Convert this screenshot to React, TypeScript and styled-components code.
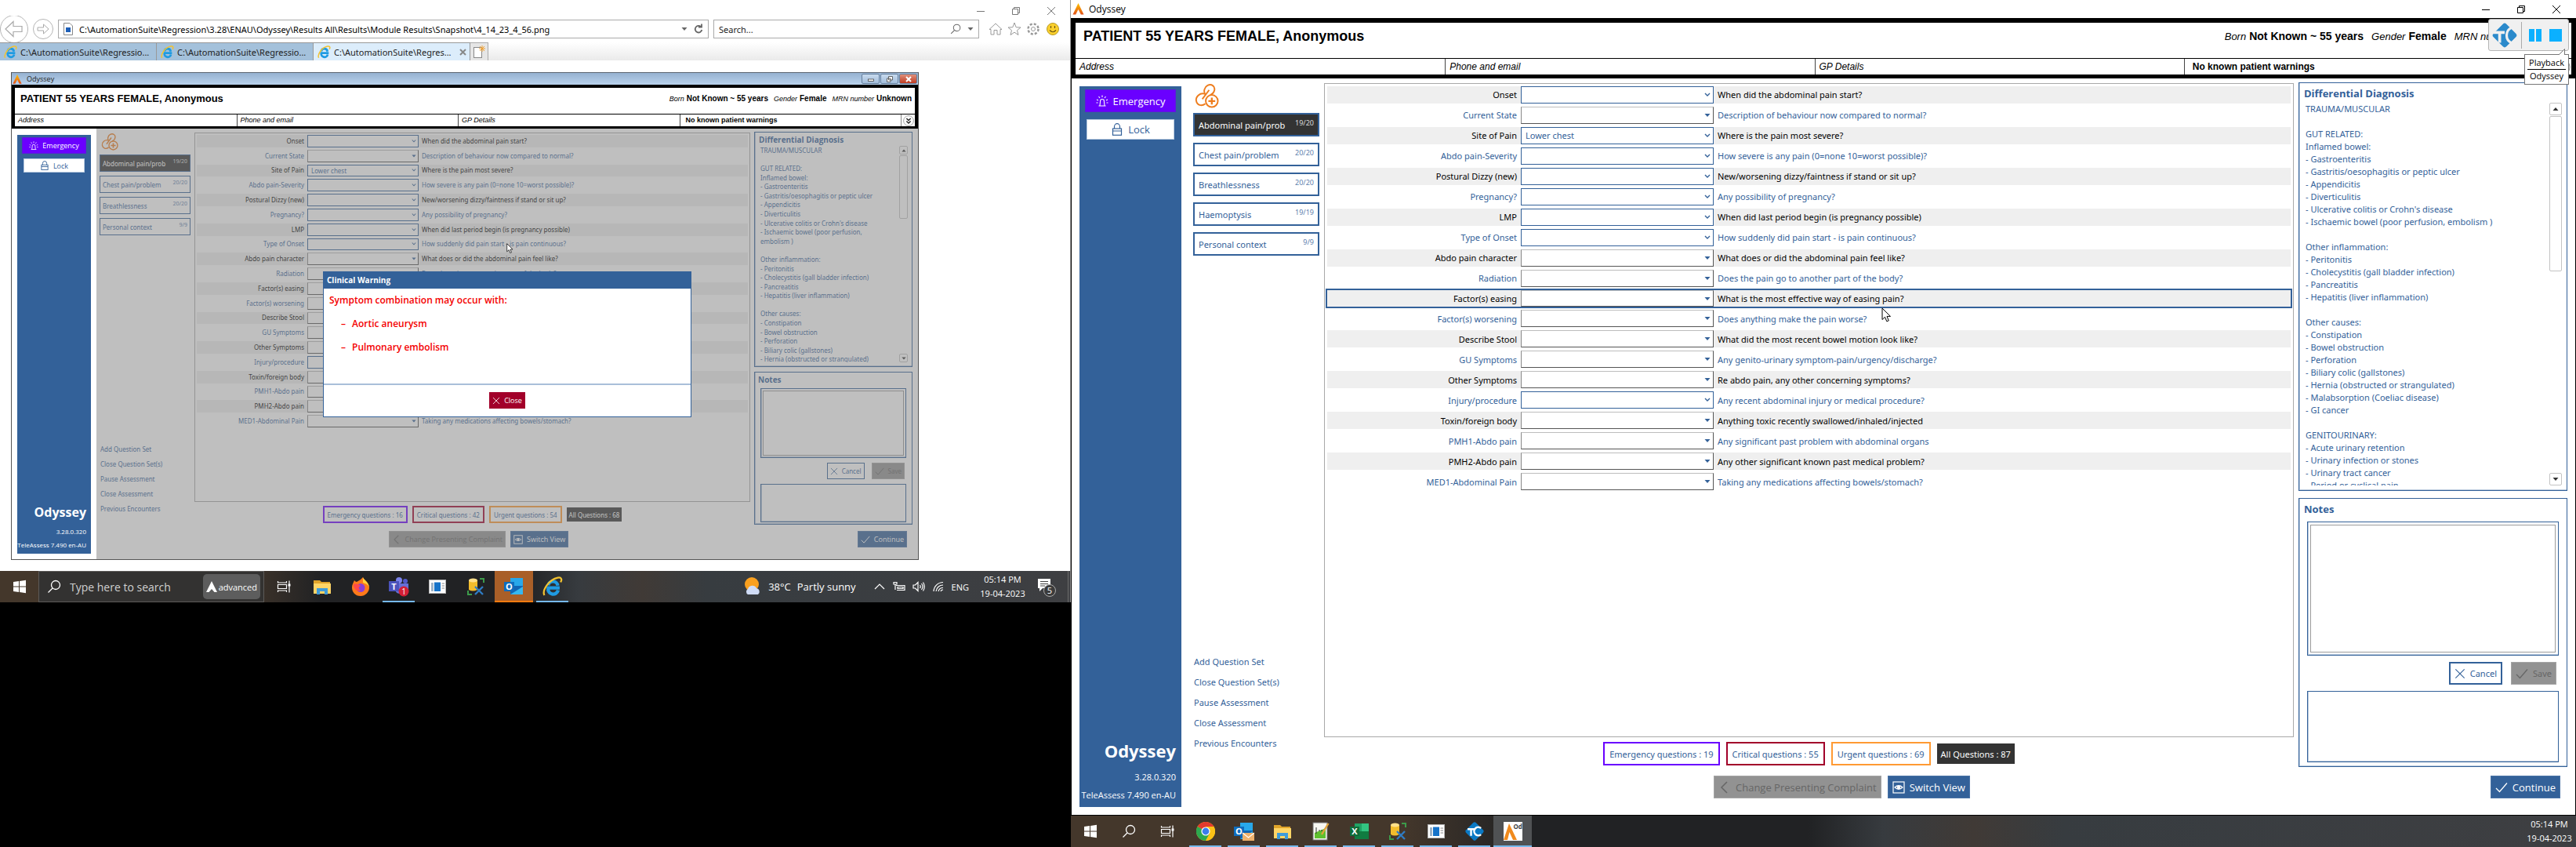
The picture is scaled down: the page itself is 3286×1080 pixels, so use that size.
import React, { useId } from "react";
import styled, { createGlobalStyle, css, ThemeProvider } from "styled-components";

/* ------------------------------------------------------------------ */
/* Sizes: the live window and the reduced snapshot share all the parts */
/* ------------------------------------------------------------------ */

interface Metrics {
  titleH: number;
  headTop: number;
  headSide: number;
  headBottom: number;
  headUpper: number;
  headLine: number;
  headLower: number;
  headPad: number;
  nameSize: number;
  factSize: number;
  factLabel: number;
  cellSize: number;
  cellPad: number;
  text: number;
  tiny: number;
  heading: number;
  button: number;
  brand: number;
  version: number;
  sideTop: number;
  sideBottom: number;
  sidePad: number;
  sideGap: number;
  sideW: number;
  emergencyH: number;
  lockH: number;
  workTop: number;
  workLeft: number;
  workRight: number;
  workBottom: number;
  navW: number;
  gap: number;
  infoW: number;
  linkIcon: number;
  tabH: number;
  tabGap: number;
  tabPad: number;
  navLinkH: number;
  navBottom: number;
  rowsH: number;
  rowGap: number;
  rowPad: number;
  labelW: number;
  comboW: number;
  textPad: number;
  countH: number;
  countPad: number;
  countGap: number;
  countTop: number;
  actionH: number;
  actionTop: number;
  actionPad: number;
  actionGap: number;
  continueGap: number;
  listH: string;
  lineH: string;
  listTop: number;
  scrollW: number;
  thumbH: number;
  notesTitle: number;
  notesH: number;
  notesSide: number;
  notesInset: number;
  notesGap: number;
  commentH: number;
  icon: number;
  border: number;
}

declare module "styled-components" {
  export interface DefaultTheme extends Metrics {}
}

const fullSize: Metrics = {
  titleH: 23, headTop: 6, headSide: 5, headBottom: 5, headUpper: 45, headLine: 35, headLower: 20, headPad: 10,
  nameSize: 18, factSize: 14, factLabel: 13, cellSize: 12, cellPad: 5,
  text: 11, tiny: 9, heading: 13, button: 13, brand: 22, version: 11,
  sideTop: 10, sideBottom: 10, sidePad: 10, sideGap: 7, sideW: 130, emergencyH: 29, lockH: 26,
  workTop: 5, workLeft: 8, workRight: 10, workBottom: 21, navW: 161, gap: 6, infoW: 343,
  linkIcon: 31, tabH: 30, tabGap: 8, tabPad: 5, navLinkH: 26, navBottom: 17,
  rowsH: 515, rowGap: 4, rowPad: 3, labelW: 247, comboW: 246, textPad: 5,
  countH: 30, countPad: 6, countGap: 8, countTop: 6,
  actionH: 29, actionTop: 11, actionPad: 5, actionGap: 8, continueGap: 9,
  listH: "auto", lineH: "16px", listTop: 25, scrollW: 16, thumbH: 198,
  notesTitle: 29, notesH: 171, notesSide: 10, notesInset: 3, notesGap: 8, commentH: 91,
  icon: 16, border: 2,
};

const snapshotSize: Metrics = {
  titleH: 16, headTop: 4, headSide: 4, headBottom: 3, headUpper: 33, headLine: 28, headLower: 15, headPad: 7,
  nameSize: 13, factSize: 10, factLabel: 9, cellSize: 9, cellPad: 4,
  text: 8, tiny: 7, heading: 10, button: 9, brand: 16, version: 8,
  sideTop: 8, sideBottom: 7, sidePad: 7, sideGap: 7, sideW: 94, emergencyH: 21, lockH: 18,
  workTop: 4, workLeft: 4, workRight: 7, workBottom: 15, navW: 116, gap: 5, infoW: 202,
  linkIcon: 22, tabH: 22, tabGap: 5, tabPad: 3, navLinkH: 19, navBottom: 11,
  rowsH: 373, rowGap: 3, rowPad: 2, labelW: 141, comboW: 142, textPad: 4,
  countH: 22, countPad: 4, countGap: 6, countTop: 5,
  actionH: 21, actionTop: 8, actionPad: 3, actionGap: 6, continueGap: 7,
  listH: "278px", lineH: "11px", listTop: 17, scrollW: 11, thumbH: 81,
  notesTitle: 20, notesH: 89, notesSide: 7, notesInset: 2, notesGap: 6, commentH: 49,
  icon: 12, border: 1,
};

const BLUE = "#336199";
const VIOLET = "#6a00ff";
const CRIMSON = "#a2002a";
const AMBER = "#ff9a33";
const UI = `"Open Sans", "Noto Sans", sans-serif`;
const FORM = `"Noto Sans", "Open Sans", sans-serif`;
const ARIAL = `"Liberation Sans", Arial, sans-serif`;

const GlobalStyle = createGlobalStyle`
  *, *::before, *::after { box-sizing: border-box; }
  body { margin: 0; background: #000; font-family: ${UI}; color: #000; }
  button, input, select, textarea { font-family: inherit; margin: 0; border-radius: 0; }
  h1, h2, ul, p, dl, dd { margin: 0; padding: 0; }
  ul { list-style: none; }
  svg { display: block; flex: none; }
  a { text-decoration: none; color: inherit; }
`;

const Screens = styled.main`
  display: grid;
  grid-template-columns: 1366fr 1920fr;
  grid-template-rows: minmax(0, 1fr);
  height: 100vh;
  align-items: start;
`;

/* ------------------------------ icons ------------------------------ */

const LogoA = ({ size }: { size: number }) => (
  <svg width={size} height={size} viewBox="0 0 16 16">
    <defs>
      <linearGradient id="flame" x1="0" y1="0" x2="0" y2="1">
        <stop offset="0" stopColor="#ffc400" />
        <stop offset="1" stopColor="#e2501a" />
      </linearGradient>
    </defs>
    <path d="M8 0 L15.500 15.500 H11.500 L8 8.500 L4.500 15.500 H.5 Z" fill="url(#flame)" />
  </svg>
);

const Siren = ({ size }: { size: number }) => (
  <svg width={size} height={size} viewBox="0 0 16 16" fill="none" stroke="currentColor" strokeWidth="1.1">
    <path d="M5 13.500 L5.800 6.500 Q8 4.500 10.200 6.500 L11 13.500 M3.500 14 H12.500 M8 .5 V3 M3.500 2 L5 4 M12.500 2 L11 4 M1 6 L3 7 M15 6 L13 7 M.5 10 H2.500 M15.500 10 H13.500" />
  </svg>
);

const Padlock = ({ size }: { size: number }) => (
  <svg width={size} height={size} viewBox="0 0 16 16" fill="none" stroke="currentColor" strokeWidth="1.2">
    <rect x="2.500" y="7" width="11" height="8.300" />
    <path d="M4.500 7 V4.500 A3.500 3.800 0 0 1 11.500 4.500 V7 M2.500 10 H13.500" />
  </svg>
);

const ChainPlus = ({ size }: { size: number }) => (
  <svg width={size} height={size} viewBox="0 0 32 32" fill="none" stroke="#ee7d1e" strokeWidth="2">
    <path d="M14 14 C11 10 13 4 17 2 C22 -.5 27 3 26 8 C25.500 11 23 13.500 20.500 14.500" />
    <path d="M19 8 L10 20 M13 13 C7 11 1 17 2 22 C3 28 9 30 14 26" />
    <circle cx="22.500" cy="22.500" r="8" />
    <path d="M22.500 18 V27 M18 22.500 H27" strokeWidth="2.400" />
  </svg>
);

const ChevronDown = ({ size }: { size: number }) => (
  <svg width={size} height={size} viewBox="0 0 8 8" fill="none" stroke={BLUE} strokeWidth="1.400">
    <path d="M1 2 L4 5 L7 2" />
  </svg>
);

const Triangle = ({ size, up, color = BLUE }: { size: number; up?: boolean; color?: string }) => (
  <svg width={size} height={size} viewBox="0 0 8 8" fill={color}>
    <path d={up ? "M.5 6 H7.500 L4 2 Z" : "M.5 2 H7.500 L4 6 Z"} />
  </svg>
);

const Tick = ({ size }: { size: number }) => (
  <svg width={size} height={size} viewBox="0 0 16 16" fill="none" stroke="currentColor" strokeWidth="1.300">
    <path d="M1 9 L5.500 13.500 L15 2.500" />
  </svg>
);

const Cross = ({ size }: { size: number }) => (
  <svg width={size} height={size} viewBox="0 0 16 16" fill="none" stroke="currentColor" strokeWidth="1.300">
    <path d="M1.500 1.500 L14.500 14.500 M14.500 1.500 L1.500 14.500" />
  </svg>
);

const AngleLeft = ({ size }: { size: number }) => (
  <svg width={size} height={size} viewBox="0 0 16 16" fill="none" stroke="currentColor" strokeWidth="1.500">
    <path d="M11 1 L4 8 L11 15" />
  </svg>
);

const EyeBox = ({ size }: { size: number }) => (
  <svg width={size} height={size} viewBox="0 0 16 16" fill="none" stroke="currentColor" strokeWidth="1.200">
    <rect x="1" y="1" width="14" height="14" />
    <path d="M3 8 Q8 3.500 13 8 Q8 12.500 3 8 Z" />
    <circle cx="8" cy="8" r="1.600" fill="currentColor" />
  </svg>
);

const DoubleChevron = ({ size }: { size: number }) => (
  <svg width={size} height={size} viewBox="0 0 16 16" fill="none" stroke="#222" strokeWidth="1.600">
    <circle cx="8" cy="8" r="7.300" stroke="#999" strokeWidth="1" />
    <path d="M5 4.500 L8 7.500 L11 4.500 M5 8.500 L8 11.500 L11 8.500" />
  </svg>
);

const WindowGlyph = ({ kind, color }: { kind: "min" | "max" | "close"; color: string }) => (
  <svg width="12" height="12" viewBox="0 0 12 12" fill="none" stroke={color}>
    {kind === "min" && <path d="M1 6.500 H11" />}
    {kind === "max" && <path d="M1.500 3.500 H8.500 V10.500 H1.500 Z M3.500 3 V1.500 H10.500 V8.500 H9" />}
    {kind === "close" && <path d="M1 1 L11 11 M11 1 L1 11" />}
  </svg>
);

const Pointer = ({ size }: { size: number }) => (
  <svg width={size} height={size} viewBox="0 0 20 20">
    <path d="M1 1 V15.500 L4.500 12.300 L6.800 17.800 L9.300 16.800 L7 11.400 H11.500 Z" fill="#fff" stroke="#000" />
  </svg>
);

const Explorer = ({ size = 16 }: { size?: number }) => (
  <svg width={size} height={size} viewBox="0 0 16 16" fill="none">
    <path d="M13.500 9 H4.500 A3.800 3.800 0 0 0 12.300 10.800 M4.500 7 A3.800 3.800 0 0 1 12 7.300" stroke="#1f9be2" strokeWidth="2.600" />
    <path d="M1.500 14.800 C-.5 11 5 2.500 12 1 C15 .4 15.500 2.500 14.200 4.500" stroke="#f2c230" strokeWidth="1.400" />
  </svg>
);

/* -------------------------- question window ------------------------- */

type Tone = "blue" | "plain";
interface Question { label: string; text: string; list?: boolean; value?: string }

const questions: Question[] = [
  { label: "Onset", text: "When did the abdominal pain start?", list: true },
  { label: "Current State", text: "Description of behaviour now compared to normal?" },
  { label: "Site of Pain", text: "Where is the pain most severe?", list: true, value: "Lower chest" },
  { label: "Abdo pain-Severity", text: "How severe is any pain (0=none 10=worst possible)?", list: true },
  { label: "Postural Dizzy (new)", text: "New/worsening dizzy/faintness if stand or sit up?", list: true },
  { label: "Pregnancy?", text: "Any possibility of pregnancy?", list: true },
  { label: "LMP", text: "When did last period begin (is pregnancy possible)", list: true },
  { label: "Type of Onset", text: "How suddenly did pain start - is pain continuous?", list: true },
  { label: "Abdo pain character", text: "What does or did the abdominal pain feel like?" },
  { label: "Radiation", text: "Does the pain go to another part of the body?" },
  { label: "Factor(s) easing", text: "What is the most effective way of easing pain?" },
  { label: "Factor(s) worsening", text: "Does anything make the pain worse?" },
  { label: "Describe Stool", text: "What did the most recent bowel motion look like?" },
  { label: "GU Symptoms", text: "Any genito-urinary symptom-pain/urgency/discharge?" },
  { label: "Other Symptoms", text: "Re abdo pain, any other concerning symptoms?" },
  { label: "Injury/procedure", text: "Any recent abdominal injury or medical procedure?", list: true },
  { label: "Toxin/foreign body", text: "Anything toxic recently swallowed/inhaled/injected" },
  { label: "PMH1-Abdo pain", text: "Any significant past problem with abdominal organs" },
  { label: "PMH2-Abdo pain", text: "Any other significant known past medical problem?" },
  { label: "MED1-Abdominal Pain", text: "Taking any medications affecting bowels/stomach?" },
];

const diagnosis = (wrapped: boolean): string[] => [
  "TRAUMA/MUSCULAR", "", "GUT RELATED:", "Inflamed bowel:", "- Gastroenteritis",
  "- Gastritis/oesophagitis or peptic ulcer", "- Appendicitis", "- Diverticulitis",
  "- Ulcerative colitis or Crohn's disease",
  ...(wrapped ? ["- Ischaemic bowel (poor perfusion,", "embolism )"] : ["- Ischaemic bowel (poor perfusion, embolism )"]),
  "", "Other inflammation:", "- Peritonitis", "- Cholecystitis (gall bladder infection)", "- Pancreatitis",
  "- Hepatitis (liver inflammation)", "", "Other causes:", "- Constipation", "- Bowel obstruction",
  "- Perforation", "- Biliary colic (gallstones)", "- Hernia (obstructed or strangulated)",
  ...(wrapped ? [] : ["- Malabsorption (Coeliac disease)", "- GI cancer", "", "GENITOURINARY:",
    "- Acute urinary retention", "- Urinary infection or stones", "- Urinary tract cancer", "- Period or cyclical pain"]),
];

const Header = styled.header`
  border: solid #000;
  border-width: ${(p) => `${p.theme.headTop}px ${p.theme.headSide}px ${p.theme.headBottom}px`};
  background: #fff;
  font-family: ${ARIAL};
`;

const HeaderTop = styled.div`
  display: flex;
  justify-content: space-between;
  height: ${(p) => p.theme.headUpper}px;
  line-height: ${(p) => p.theme.headLine}px;
  padding: 0 ${(p) => p.theme.cellPad}px 0 ${(p) => p.theme.headPad}px;
  white-space: nowrap;
`;

const PatientName = styled.h1`
  font-size: ${(p) => p.theme.nameSize}px;
  font-weight: bold;
  line-height: inherit;
`;

const Facts = styled.dl`
  display: flex;
  gap: ${(p) => p.theme.headPad}px;
  div { display: flex; gap: ${(p) => p.theme.cellPad - 1}px; }
  dt { font-style: italic; font-size: ${(p) => p.theme.factLabel}px; }
  dd { font-weight: bold; font-size: ${(p) => p.theme.factSize}px; }
`;

const HeaderCells = styled.div`
  display: grid;
  grid-template-columns: repeat(4, 1fr) ${(p) => p.theme.headLower + 3}px;
  height: ${(p) => p.theme.headLower + 1}px;
  border-top: 1px solid #000;
`;

const HeaderCell = styled.div<{ $strong?: boolean }>`
  padding-left: ${(p) => (p.$strong ? p.theme.headPad : p.theme.cellPad)}px;
  font-size: ${(p) => p.theme.cellSize}px;
  line-height: ${(p) => p.theme.headLower}px;
  font-style: ${(p) => (p.$strong ? "normal" : "italic")};
  font-weight: ${(p) => (p.$strong ? "bold" : "normal")};
  white-space: nowrap;
  & + & { border-left: 1px solid #444; }
`;

const ExpandButton = styled.button`
  display: grid;
  place-items: center;
  padding: 0;
  border: 0;
  border-left: 1px solid #888;
  background: #fff;
`;

const Body = styled.div`
  display: flex;
  flex: 1;
  min-height: 0;
`;

const SideRail = styled.aside`
  display: flex;
  flex-direction: column;
  align-items: center;
  width: ${(p) => p.theme.sideW}px;
  margin: ${(p) => `${p.theme.sideTop}px ${p.theme.sideGap}px ${p.theme.sideBottom}px ${p.theme.sidePad}px`};
  padding: ${(p) => p.theme.rowGap}px ${(p) => p.theme.headSide + 2}px;
  gap: ${(p) => p.theme.tabGap + 1}px;
  background: ${BLUE};
  color: #fff;
`;

const RailButton = styled.button<{ $urgent?: boolean }>`
  display: flex;
  align-items: center;
  justify-content: center;
  gap: ${(p) => p.theme.gap}px;
  width: ${(p) => (p.$urgent ? "100%" : "96%")};
  height: ${(p) => (p.$urgent ? p.theme.emergencyH : p.theme.lockH)}px;
  padding: 0;
  border: 1px solid ${(p) => (p.$urgent ? "#5d18dc" : "#b9cbe0")};
  background: ${(p) => (p.$urgent ? VIOLET : "#fff")};
  color: ${(p) => (p.$urgent ? "#fff" : BLUE)};
  font-size: ${(p) => p.theme.button}px;
`;

const Brand = styled.div`
  display: flex;
  flex-direction: column;
  align-items: flex-end;
  width: 100%;
  margin-top: auto;
  font-size: ${(p) => p.theme.version}px;
  line-height: ${(p) => p.theme.version + p.theme.headPad + 2}px;
  white-space: nowrap;
  strong {
    font-size: ${(p) => p.theme.brand}px;
    line-height: ${(p) => p.theme.brand * 2}px;
  }
`;

const Work = styled.section`
  position: relative;
  display: flex;
  flex-direction: column;
  flex: 1;
  min-width: 0;
  padding: ${(p) => `${p.theme.workTop}px ${p.theme.workRight}px ${p.theme.workBottom}px ${p.theme.workLeft}px`};
  color: ${BLUE};
  font-family: ${FORM};
  font-size: ${(p) => p.theme.text}px;
`;

const Columns = styled.div`
  display: grid;
  grid-template-columns: ${(p) => p.theme.navW}px minmax(0, 1fr) ${(p) => p.theme.infoW}px;
  grid-template-rows: minmax(0, 1fr);
  column-gap: ${(p) => p.theme.gap}px;
  flex: 1;
  min-height: 0;
`;

const Nav = styled.nav`
  display: flex;
  flex-direction: column;
  padding: 2px 0 ${(p) => p.theme.navBottom}px;
`;

const ChainButton = styled.button`
  align-self: flex-start;
  padding: 0;
  margin: 0 0 ${(p) => p.theme.gap}px 2px;
  border: 0;
  background: none;
`;

const TabList = styled.ul`
  display: grid;
  gap: ${(p) => p.theme.tabGap}px;
`;

const SetTab = styled.button<{ $active?: boolean }>`
  display: flex;
  justify-content: space-between;
  align-items: center;
  width: 100%;
  height: ${(p) => p.theme.tabH}px;
  padding: 0 ${(p) => p.theme.tabPad}px;
  border: ${(p) => p.theme.border}px solid ${BLUE};
  background: ${(p) => (p.$active ? "#333" : "transparent")};
  color: ${(p) => (p.$active ? "#fff" : BLUE)};
  font-size: ${(p) => p.theme.text}px;
  white-space: nowrap;
  small {
    align-self: flex-start;
    font-size: ${(p) => p.theme.tiny}px;
    line-height: ${(p) => p.theme.lockH - p.theme.rowGap}px;
    opacity: 0.8;
  }
`;

const NavLinks = styled.ul`
  margin-top: auto;
  padding-left: 1px;
  a {
    display: block;
    line-height: ${(p) => p.theme.navLinkH}px;
  }
`;

const Center = styled.div`
  display: flex;
  flex-direction: column;
  gap: ${(p) => p.theme.countTop}px;
  padding: 1px 0 2px;
`;

const Sheet = styled.div`
  flex: 1;
  border: 1px solid #a9a9a9;
  padding: ${(p) => p.theme.rowPad}px;
`;

const Rows = styled.div`
  display: flex;
  flex-direction: column;
  gap: ${(p) => p.theme.rowGap}px;
  height: ${(p) => p.theme.rowsH}px;
`;

const Row = styled.div<{ $shaded: boolean; $current: boolean }>`
  display: grid;
  grid-template-columns: ${(p) => p.theme.labelW}px ${(p) => p.theme.comboW}px minmax(0, 1fr);
  grid-template-rows: minmax(0, 1fr);
  align-items: stretch;
  flex: 1;
  min-height: 0;
  background: ${(p) => (p.$shaded ? "#efefef" : "transparent")};
  color: ${(p) => (p.$shaded ? "#000" : BLUE)};
  outline: ${(p) => (p.$current ? `2px solid ${BLUE}` : "none")};
  white-space: nowrap;
  label, p { display: flex; align-items: center; line-height: 1; }
  label { justify-content: flex-end; padding-right: ${(p) => p.theme.textPad}px; }
  p { padding-left: ${(p) => p.theme.textPad}px; }
`;

const Combo = styled.span<{ $tone: Tone }>`
  display: grid;
  grid-template: minmax(0, 1fr) / minmax(0, 1fr);
  align-items: center;
  background: #fff;
  border: 1px solid;
  border-color: ${(p) => (p.$tone === "blue" ? BLUE : "#bdbdbd #555 #555 #888")};
  select, svg { grid-area: 1 / 1; }
  select {
    appearance: none;
    width: 100%;
    height: 100%;
    padding: 0 ${(p) => p.theme.textPad}px;
    border: 0;
    background: transparent;
    color: ${BLUE};
    font-size: ${(p) => p.theme.text}px;
  }
  svg { justify-self: end; margin-right: ${(p) => p.theme.rowPad}px; pointer-events: none; }
`;

const Counts = styled.div`
  display: flex;
  justify-content: center;
  align-items: center;
  gap: ${(p) => p.theme.countGap}px;
`;

const CountButton = styled.button<{ $edge: string; $solid?: boolean }>`
  height: ${(p) => p.theme.countH - (p.$solid ? 4 : 0)}px;
  padding: 0 ${(p) => (p.$solid ? p.theme.countPad - 1 : p.theme.countPad)}px;
  border: ${(p) => (p.$solid ? 0 : 2)}px solid ${(p) => p.$edge};
  background: ${(p) => (p.$solid ? p.$edge : "transparent")};
  color: ${(p) => (p.$solid ? "#fff" : BLUE)};
  font-size: ${(p) => p.theme.text}px;
  white-space: nowrap;
`;

const Info = styled.div`
  display: flex;
  flex-direction: column;
  gap: ${(p) => p.theme.tabGap + 1}px;
  min-height: 0;
`;

const panelEdge = css`
  border: 1px solid ${BLUE};
  box-shadow: inset 1px -1px 0 #b8c9dd;
`;

const DiagnosisPanel = styled.section`
  ${panelEdge}
  display: grid;
  grid-template: ${(p) => p.theme.listTop}px minmax(0, 1fr) / minmax(0, 1fr) auto;
  flex: 1;
  min-height: 0;
  padding: 0 ${(p) => p.theme.gap}px ${(p) => p.theme.gap}px;
`;

const PanelTitle = styled.h2`
  grid-column: 1 / -1;
  display: flex;
  align-items: center;
  font-family: ${UI};
  font-size: ${(p) => p.theme.heading}px;
  font-weight: 700;
`;

const DiagnosisText = styled.div`
  overflow: hidden;
  padding-left: 2px;
  ul {
    display: grid;
    grid-auto-rows: minmax(0, 1fr);
    height: ${(p) => p.theme.listH};
  }
  li { line-height: ${(p) => p.theme.lineH}; min-height: ${(p) => p.theme.lineH}; white-space: nowrap; }
`;

const ScrollTrack = styled.div`
  display: flex;
  flex-direction: column;
  gap: 1px;
  width: ${(p) => p.theme.scrollW}px;
  i { border: 1px solid #c3c3c3; border-radius: 2px; height: ${(p) => p.theme.thumbH}px; }
`;

const ScrollButton = styled.button<{ $end?: boolean }>`
  display: grid;
  place-items: center;
  height: ${(p) => p.theme.scrollW}px;
  margin-top: ${(p) => (p.$end ? "auto" : 0)};
  padding: 0;
  border: 1px solid #c3c3c3;
  border-radius: 2px;
  background: transparent;
`;

const NotesPanel = styled.section`
  ${panelEdge}
  display: flex;
  flex-direction: column;
  gap: ${(p) => p.theme.notesGap}px;
  padding: 0 ${(p) => p.theme.notesSide}px ${(p) => p.theme.notesSide - 5}px;
  ${PanelTitle} {
    height: ${(p) => p.theme.notesTitle}px;
    margin: 0 -${(p) => p.theme.rowGap}px -${(p) => p.theme.notesGap}px;
    padding-bottom: ${(p) => p.theme.rowGap}px;
  }
`;

const NotesFrame = styled.div`
  ${panelEdge}
  display: flex;
  height: ${(p) => p.theme.notesH}px;
  padding: ${(p) => p.theme.notesInset}px;
  textarea { flex: 1; border: 1px solid #9c9c9c; background: transparent; resize: none; }
`;

const CommentBox = styled.textarea`
  ${panelEdge}
  height: ${(p) => p.theme.commentH}px;
  background: transparent;
  resize: none;
`;

const NotesButtons = styled.div`
  display: flex;
  justify-content: flex-end;
  gap: ${(p) => p.theme.notesGap + 3}px;
  padding-right: ${(p) => p.theme.notesInset}px;
`;

const looks = {
  primary: css`background: ${BLUE}; color: #fff; border: 1px solid #4a73a6;`,
  muted: css`background: #929292; color: #666; border: 1px solid #a5a5a5;`,
  outline: css`background: transparent; color: ${BLUE}; border: ${(p) => p.theme.border}px solid ${BLUE};`,
  danger: css`background: ${CRIMSON}; color: #fff; border: 1px solid ${CRIMSON};`,
};

const ActionButton = styled.button<{ $look: keyof typeof looks; $small?: boolean }>`
  display: flex;
  align-items: center;
  justify-content: center;
  gap: ${(p) => p.theme.gap}px;
  height: ${(p) => p.theme.actionH}px;
  padding: 0 ${(p) => p.theme.actionPad}px;
  font-family: ${(p) => (p.$small ? FORM : UI)};
  font-size: ${(p) => (p.$small ? p.theme.text : p.theme.button)}px;
  white-space: nowrap;
  ${(p) => looks[p.$look]}
`;

const ActionBar = styled.div`
  display: flex;
  margin-top: ${(p) => p.theme.actionTop}px;
  padding-right: ${(p) => p.theme.continueGap}px;
`;

const ActionCentre = styled.div`
  display: flex;
  flex: 1;
  justify-content: center;
  gap: ${(p) => p.theme.actionGap}px;
`;

interface FormProps {
  tabs: [string, string][];
  counts: [number, number, number, number];
  current?: string;
  metrics: Metrics;
  small?: boolean;
  children?: React.ReactNode;
}

function AssessmentForm({ tabs, counts, current, metrics: m, small, children }: FormProps) {
  const id = useId();
  const arrow = small ? 6 : 8;
  return (
    <>
      <Header>
        <HeaderTop>
          <PatientName>PATIENT 55 YEARS FEMALE, Anonymous</PatientName>
          <Facts>
            <div><dt>Born</dt><dd>Not Known ~ 55 years</dd></div>
            <div><dt>Gender</dt><dd>Female</dd></div>
            <div><dt>MRN number</dt><dd>Unknown</dd></div>
          </Facts>
        </HeaderTop>
        <HeaderCells>
          <HeaderCell>Address</HeaderCell>
          <HeaderCell>Phone and email</HeaderCell>
          <HeaderCell>GP Details</HeaderCell>
          <HeaderCell $strong>No known patient warnings</HeaderCell>
          <ExpandButton aria-label="Expand patient details"><DoubleChevron size={m.headLower - 1} /></ExpandButton>
        </HeaderCells>
      </Header>
      <Body>
        <SideRail>
          <RailButton $urgent><Siren size={m.icon} />Emergency</RailButton>
          <RailButton><Padlock size={m.icon} />Lock</RailButton>
          <Brand>
            <strong>Odyssey</strong>
            <span>3.28.0.320</span>
            <span>TeleAssess 7.490 en-AU</span>
          </Brand>
        </SideRail>
        <Work>
          <Columns>
            <Nav>
              <ChainButton aria-label="Link question set"><ChainPlus size={m.linkIcon} /></ChainButton>
              <TabList>
                {tabs.map(([name, count], i) => (
                  <li key={name}>
                    <SetTab $active={i === 0}>{name}<small>{count}</small></SetTab>
                  </li>
                ))}
              </TabList>
              <NavLinks>
                {["Add Question Set", "Close Question Set(s)", "Pause Assessment", "Close Assessment", "Previous Encounters"].map((t) => (
                  <li key={t}><a href="#">{t}</a></li>
                ))}
              </NavLinks>
            </Nav>
            <Center>
              <Sheet>
                <Rows>
                  {questions.map((q, i) => (
                    <Row key={q.label} $shaded={i % 2 === 0} $current={q.label === current}>
                      <label htmlFor={`${id}-${i}`}>{q.label}</label>
                      <Combo $tone={q.list ? "blue" : "plain"}>
                        <select id={`${id}-${i}`} defaultValue={q.value ?? ""}>
                          <option value={q.value ?? ""}>{q.value ?? ""}</option>
                        </select>
                        {q.list ? <ChevronDown size={arrow} /> : <Triangle size={arrow} />}
                      </Combo>
                      <p>{q.text}</p>
                    </Row>
                  ))}
                </Rows>
              </Sheet>
              <Counts>
                <CountButton $edge={VIOLET}>Emergency questions : {counts[0]}</CountButton>
                <CountButton $edge={CRIMSON}>Critical questions : {counts[1]}</CountButton>
                <CountButton $edge={AMBER}>Urgent questions : {counts[2]}</CountButton>
                <CountButton $edge="#333" $solid>All Questions : {counts[3]}</CountButton>
              </Counts>
            </Center>
            <Info>
              <DiagnosisPanel>
                <PanelTitle>Differential Diagnosis</PanelTitle>
                <DiagnosisText>
                  <ul>
                    {diagnosis(!!small).map((line, i) => <li key={i}>{line}</li>)}
                  </ul>
                </DiagnosisText>
                <ScrollTrack>
                  <ScrollButton aria-label="Scroll up"><Triangle size={arrow} up color="#333" /></ScrollButton>
                  <i />
                  <ScrollButton $end aria-label="Scroll down"><Triangle size={arrow} color="#333" /></ScrollButton>
                </ScrollTrack>
              </DiagnosisPanel>
              <NotesPanel>
                <PanelTitle>Notes</PanelTitle>
                <NotesFrame><textarea aria-label="Notes" /></NotesFrame>
                <NotesButtons>
                  <ActionButton $look="outline" $small><Cross size={m.icon - 2} />Cancel</ActionButton>
                  <ActionButton $look="muted" $small disabled><Tick size={m.icon} />Save</ActionButton>
                </NotesButtons>
                <CommentBox aria-label="Saved notes" />
              </NotesPanel>
            </Info>
          </Columns>
          <ActionBar>
            <ActionCentre>
              <ActionButton $look="muted" disabled><AngleLeft size={m.icon} />Change Presenting Complaint</ActionButton>
              <ActionButton $look="primary"><EyeBox size={m.icon} />Switch View</ActionButton>
            </ActionCentre>
            <ActionButton $look="primary"><Tick size={m.icon} />Continue</ActionButton>
          </ActionBar>
          {children}
        </Work>
      </Body>
    </>
  );
}

/* ------------------------------ taskbar ----------------------------- */

const TaskBar = styled.footer`
  display: flex;
  align-items: stretch;
  flex: none;
  height: 40px;
  color: #fff;
  font-size: 11px;
  white-space: nowrap;
  background: linear-gradient(90deg, #44372b 0 22%, #212224 30% 49%, #373b3f 54%, #403a36 60%, #373c40 66%, #3e3f42);
`;

const TaskButton = styled.button<{ $open?: boolean; $fill?: string; $line?: string }>`
  display: grid;
  place-items: center;
  width: 49px;
  padding: 0;
  border: 0;
  background: ${(p) => p.$fill ?? "transparent"};
  box-shadow: ${(p) => (p.$open ? `inset 0 -2px 0 ${p.$line ?? "#76b9ed"}` : "none")};
  ${(p) => p.$open && !p.$fill && css`
    width: 41px;
    margin: 0 4px;
  `}
`;

const SearchBox = styled.label`
  display: flex;
  align-items: center;
  gap: 11px;
  width: 288px;
  padding: 0 4px 0 10px;
  border: 1px solid #5c5a58;
  background: #333231;
  input {
    flex: 1;
    min-width: 0;
    border: 0;
    padding: 0;
    background: none;
    color: #ddd;
    font-size: 14px;
    &::placeholder { color: #d0d0d0; opacity: 1; }
  }
`;

const Sponsor = styled.span`
  display: flex;
  align-items: center;
  gap: 2px;
  height: 32px;
  padding: 0 4px;
  border-radius: 5px;
  background: #5d5d5d;
  font-size: 11px;
`;

const Tray = styled.div`
  display: flex;
  align-items: center;
  gap: 9px;
  margin-left: auto;
`;

const Weather = styled.span`
  display: flex;
  align-items: center;
  gap: 8px;
  margin-right: 13px;
  font-size: 13px;
`;

const Clock = styled.time`
  width: 58px;
  margin: 0 5px;
  text-align: center;
  line-height: 18px;
`;

const ShowDesktop = styled.span`
  align-self: stretch;
  width: 3px;
  margin-left: 5px;
  border-left: 1px solid #6c6c6c;
`;

const Start = () => (
  <svg width="18" height="18" viewBox="0 0 18 18" fill="#fff">
    <path d="M1 3 L8 2 V8.500 H1 Z M9 1.900 L17 .8 V8.500 H9 Z M1 9.500 H8 V16 L1 15 Z M9 9.500 H17 V17.200 L9 16.100 Z" />
  </svg>
);
const Magnifier = ({ color = "#fff", size = 18 }: { color?: string; size?: number }) => (
  <svg width={size} height={size} viewBox="0 0 18 18" fill="none" stroke={color} strokeWidth="1.300">
    <circle cx="11" cy="7" r="5.500" /><path d="M7 11 L1.500 16.500" />
  </svg>
);
const TaskView = () => (
  <svg width="18" height="18" viewBox="0 0 18 18" fill="none" stroke="#fff" strokeWidth="1.200">
    <path d="M1.500 2 V4 H12.500 V2 M1.500 16 V14 H12.500 V16 M1.500 6.500 H12.500 V11.500 H1.500 Z M16 1.500 V16.500" /><path d="M14.500 7 H17.500" strokeWidth="3" />
  </svg>
);
const Folder = () => (
  <svg width="24" height="22" viewBox="0 0 24 22">
    <path d="M1 3 H9 L11 5 H22 V19 H1 Z" fill="#e0a42a" /><path d="M1 7 H23 V20 H1 Z" fill="#ffd566" />
    <path d="M5 13 H19 V21 H15 V17 H9 V21 H5 Z" fill="#3f9bd9" />
  </svg>
);
const Firefox = () => (
  <svg width="24" height="24" viewBox="0 0 24 24">
    <path d="M12 3 C14 1 14 1 15 0 C16 4 22 5 23 13 C23 19 18 24 12 24 C5 24 1 19 1 13 C1 9 3 7 4 4 C5 5 6 6 7 6 Z" fill="#ff7a1a" />
    <path d="M15 0 C16 4 22 5 23 13 C21 8 17 8 15 7 Z" fill="#ffd43a" />
    <circle cx="12" cy="13.500" r="5.500" fill="#8a3fd6" /><path d="M3 9 C7 8 10 9 12 11 C9 12 9 15 12 17 C7 19 3 15 3 9 Z" fill="#ff4a4a" />
  </svg>
);
const Teams = () => (
  <svg width="28" height="26" viewBox="0 0 28 26">
    <circle cx="14" cy="5" r="4" fill="#7b83eb" /><circle cx="22" cy="6" r="3" fill="#5059c9" />
    <path d="M9 9 H26 V17 Q26 22 19 22 Q9 23 9 16 Z" fill="#6670d6" /><rect x="1" y="6" width="13" height="13" fill="#4b53bc" />
    <text x="7.500" y="16.500" fontSize="11" fontWeight="700" textAnchor="middle" fill="#fff">T</text>
    <circle cx="20" cy="19" r="6.500" fill="#d21f35" /><text x="20" y="23" fontSize="10" textAnchor="middle" fill="#fff">1</text>
  </svg>
);
const AppWindow = () => (
  <svg width="22" height="18" viewBox="0 0 22 18">
    <rect x=".5" y=".5" width="21" height="17" fill="#fff" stroke="#b5b5b5" /><rect x="3" y="4" width="3" height="11" fill="#9fb4c8" />
    <rect x="7" y="3.500" width="8" height="11.500" fill="#1673c9" /><path d="M16.500 5 H20 M16.500 8 H20 M16.500 11 H20" stroke="#888" />
  </svg>
);
const DataTools = () => (
  <svg width="24" height="24" viewBox="0 0 24 24">
    <path d="M3 4 V16 Q8 19 14 16 V4 Z" fill="#f3bd2c" /><ellipse cx="8.500" cy="4" rx="5.500" ry="2.500" fill="#ffe08a" />
    <path d="M17 2 H22 V7 M2 17 V22 H7" fill="none" stroke="#3c9b4a" strokeWidth="2" />
    <path d="M11 12 L21 22 M21 12 L11 22" stroke="#2f7cc4" strokeWidth="2.400" />
  </svg>
);
const Outlook = ({ mail }: { mail?: boolean }) => (
  <svg width="26" height="24" viewBox="0 0 26 24">
    <rect x="8" y="1" width="16" height="12" fill="#28a8ea" /><path d="M8 11 H24 V22 H8 Z" fill="#1066b5" /><path d="M8 22 L24 12 V22 Z" fill="#35b8f1" />
    <rect x="0" y="6" width="13" height="12" fill="#0f6cbd" /><text x="6.500" y="16" fontSize="11" fontWeight="700" textAnchor="middle" fill="#fff">O</text>
    {mail && <><rect x="11" y="14" width="15" height="10" fill="#efb26c" /><path d="M11 14 L18.500 20 L26 14" fill="none" stroke="#fff" strokeWidth="1.200" /></>}
  </svg>
);
const Chrome = () => (
  <svg width="24" height="24" viewBox="0 0 24 24">
    <circle cx="12" cy="12" r="12" fill="#fbc116" /><path d="M12 12 L1.600 6 A12 12 0 0 1 22.400 6 Z" fill="#e33b2e" />
    <path d="M12 12 L1.600 6 A12 12 0 0 0 12 24 L17 15 Z" fill="#2da94f" /><path d="M12 6 H22.400 A12 12 0 0 1 12 24 L17.500 14 Z" fill="#fbc116" />
    <circle cx="12" cy="12" r="5.600" fill="#fff" /><circle cx="12" cy="12" r="4.400" fill="#3b7ded" />
  </svg>
);
const Notepad = () => (
  <svg width="22" height="24" viewBox="0 0 22 24">
    <rect x="1" y="1" width="18" height="22" fill="#f7f7f2" stroke="#777" /><path d="M3 14 L17 8 V21 H3 Z" fill="#5fbf2f" />
    <path d="M5 7 V15 M8 11 H10 M11 11 H13" stroke="#333" /><path d="M20.500 2 L12 16" stroke="#e3a33a" strokeWidth="2.400" />
  </svg>
);
const Excel = () => (
  <svg width="24" height="22" viewBox="0 0 24 22">
    <rect x="6" y="1" width="18" height="20" fill="#21a366" /><rect x="15" y="1" width="9" height="10" fill="#33c481" /><rect x="6" y="11" width="18" height="10" fill="#107c41" />
    <rect x="0" y="5" width="12" height="12" fill="#0f6b39" /><text x="6" y="15" fontSize="11" fontWeight="700" textAnchor="middle" fill="#fff">X</text>
  </svg>
);
const TestMark = ({ size, tile }: { size: number; tile?: boolean }) => (
  <svg width={size} height={size} viewBox="0 0 32 32">
    <rect x="5" y="5" width="22" height="22" rx="3" transform="rotate(45 16 16)" fill={tile ? "#0b79c4" : "#2b8acb"} />
    {tile ? (
      <path d="M5 12.500 H16 M10.500 12.500 V23 M26 11 A6.500 6.500 0 1 0 26 21" stroke="#fff" strokeWidth="3" fill="none" />
    ) : (
      <>
        <path d="M1 12.500 H16 M10 12.500 V25" stroke="#f0f0f0" strokeWidth="3.500" fill="none" />
        <path d="M24 7 A10 10 0 0 0 24 25" stroke="#f0f0f0" strokeWidth="3" fill="none" />
      </>
    )}
  </svg>
);
const OdysseyTile = () => (
  <svg width="24" height="24" viewBox="0 0 24 24">
    <rect width="24" height="24" fill="#fff" /><path d="M7 2 L17 23 H12 L7.500 13 L5 23 H0 Z" fill="#f08a1d" />
    <text x="12.500" y="9" fontSize="8" fontWeight="700" fill="#444">Od</text>
  </svg>
);
const Sun = () => (
  <svg width="24" height="24" viewBox="0 0 24 24">
    <circle cx="11" cy="9" r="9" fill="#f9a01f" /><path d="M6 22 A4 4 0 0 1 6 15 A6 6 0 0 1 17 14 A4.500 4.500 0 0 1 19 22 Z" fill="#cfdcf7" />
  </svg>
);
const TrayGlyph = ({ d }: { d: string }) => (
  <svg width="16" height="16" viewBox="0 0 16 16" fill="none" stroke="#fff" strokeWidth="1.200"><path d={d} /></svg>
);
const ActionCenter = () => (
  <svg width="26" height="28" viewBox="0 0 26 28">
    <path d="M2 4 H18 V16 H8 L4 20 V16 H2 Z" fill="#fff" /><path d="M5 7.500 H15 M5 10.500 H15 M5 13 H11" stroke="#444" />
    <circle cx="17" cy="19" r="7.500" fill="#3b3b3b" stroke="#aaa" /><text x="17" y="23" fontSize="11" textAnchor="middle" fill="#fff">5</text>
  </svg>
);

/* --------------------------- left: browser -------------------------- */

const Browser = styled.section`
  display: flex;
  flex-direction: column;
  border-right: 1px solid #9a9a9a;
  background: #fff;
  min-width: 0;
`;

const Caption = styled.div<{ $pad: number; $top?: number }>`
  display: flex;
  justify-content: flex-end;
  gap: 33px;
  padding: ${(p) => p.$top ?? 0}px ${(p) => p.$pad}px 0;
`;

const CaptionButton = styled.button`
  padding: 0;
  border: 0;
  background: none;
`;

const BrowserBar = styled.div`
  display: flex;
  align-items: center;
  gap: 6px;
  height: 34px;
  padding: 0 8px 0 0;
  overflow: hidden;
`;

const BrowserTools = styled.svg`
  margin-left: 6px;
`;

const RoundButton = styled.button<{ $size: number }>`
  display: grid;
  place-items: center;
  flex: none;
  width: ${(p) => p.$size}px;
  height: ${(p) => p.$size}px;
  padding: 0;
  border: 1px solid #b5b5b5;
  border-radius: 50%;
  background: #fff;
`;

const Field = styled.label<{ $w?: number }>`
  display: flex;
  align-items: center;
  gap: 8px;
  flex: ${(p) => (p.$w ? `0 0 ${p.$w}px` : 1)};
  height: 24px;
  padding: 0 6px;
  border: 1px solid #aaa;
  input {
    flex: 1;
    min-width: 0;
    border: 0;
    padding: 0;
    font-family: ${FORM};
    font-size: 11px;
    background: none;
    &::placeholder { color: #222; opacity: 1; }
  }
`;

const BrowserTabs = styled.div`
  display: flex;
  height: 23px;
  background: linear-gradient(#fff, #eaeaea);
`;

const BrowserTab = styled.button<{ $active?: boolean }>`
  display: flex;
  align-items: center;
  gap: 4px;
  width: 200px;
  padding: 0 4px 0 5px;
  border: solid #999;
  border-width: 1px 1px 0 0;
  background: ${(p) => (p.$active ? "#dcedfb" : "#a4c1db")};
  color: #222;
  font-family: ${FORM};
  font-size: 11px;
  white-space: nowrap;
  span { flex: 1; text-align: left; }
`;

const NewTab = styled.button`
  display: grid;
  place-items: center;
  width: 23px;
  padding: 0;
  border: solid #aaa;
  border-width: 1px 1px 0 0;
  background: #e6e6e6;
`;

const Page = styled.div`
  padding: 15px 193px 14px 14px;
`;

const SnapshotFrame = styled.article`
  display: flex;
  flex-direction: column;
  border: 1px solid #555;
  border-top: 0;
  > ${Body} { flex: 0 0 549px; }
`;

const AeroTitle = styled.div`
  display: flex;
  align-items: center;
  gap: 6px;
  height: 16px;
  padding: 0 1px;
  border-top: 1px solid #5c6672;
  background: linear-gradient(#96b2d1, #b9d2ec);
  font-size: 9px;
  color: #222;
  span { flex: 1; }
`;

const AeroButton = styled.button<{ $close?: boolean }>`
  display: grid;
  place-items: center;
  width: 23px;
  height: 13px;
  margin-left: -5px;
  padding: 0;
  border: 1px solid #66809e;
  border-radius: 2px;
  background: ${(p) => (p.$close ? "linear-gradient(#e0907c, #c03c22)" : "linear-gradient(#c8daee, #a3bedb)")};
`;

const Veil = styled.div`
  position: absolute;
  inset: 0;
  display: grid;
  place-items: center;
  background: rgba(127, 127, 127, 0.5);
`;

const Dialog = styled.div`
  width: 470px;
  border: 1px solid ${BLUE};
  background: #fff;
  color: #f40000;
  h2 {
    height: 21px;
    padding-left: 4px;
    background: ${BLUE};
    color: #fff;
    font-family: ${UI};
    font-size: 10px;
    line-height: 20px;
  }
`;

const DialogBody = styled.div`
  height: 123px;
  padding: 0 7px;
  border-bottom: 2px solid #a9bfd9;
  font-family: ${UI};
  font-size: 12px;
  font-weight: 600;
  line-height: 30px;
  ul { padding-left: 15px; }
  li { display: flex; gap: 8px; }
`;

const DialogFoot = styled.div`
  display: flex;
  justify-content: center;
  align-items: center;
  height: 40px;
`;

const SnapCursor = styled.span`
  position: absolute;
  left: 523px;
  top: 146px;
`;

function BrowserWindow() {
  const tabs = ["C:\\AutomationSuite\\Regressio...", "C:\\AutomationSuite\\Regressio...", "C:\\AutomationSuite\\Regres..."];
  return (
    <Browser>
      <Caption $pad={18} $top={8}>
        {(["min", "max", "close"] as const).map((k) => (
          <CaptionButton key={k} aria-label={k}><WindowGlyph kind={k} color="#777" /></CaptionButton>
        ))}
      </Caption>
      <BrowserBar>
        <RoundButton $size={36} aria-label="Back">
          <svg width="24" height="22" viewBox="0 0 24 22" fill="none" stroke="#aaa" strokeWidth="1.200"><path d="M1 11 L11 1.500 V7.500 H22 V14.500 H11 V20.500 Z" /></svg>
        </RoundButton>
        <RoundButton $size={26} aria-label="Forward">
          <svg width="16" height="14" viewBox="0 0 16 14" fill="none" stroke="#aaa"><path d="M15 7 L8.500 1 V5 H1 V9 H8.500 V13 Z" /></svg>
        </RoundButton>
        <Field>
          <svg width="12" height="16" viewBox="0 0 12 16"><path d="M.5 .5 H8 L11.500 4 V15.500 H.5 Z" fill="#fff" stroke="#888" /><rect x="3" y="6" width="6" height="6" fill="#1d5fb8" /></svg>
          <input aria-label="Address" defaultValue={"C:\\AutomationSuite\\Regression\\3.28\\ENAU\\Odyssey\\Results All\\Results\\Module Results\\Snapshot\\4_14_23_4_56.png"} />
          <Triangle size={8} color="#666" />
          <svg width="12" height="14" viewBox="0 0 12 14" fill="none" stroke="#666" strokeWidth="1.800"><path d="M9 4 A4.300 4.300 0 1 0 10.300 8 M6 4.500 H10 V.5" /></svg>
        </Field>
        <Field $w={339}>
          <input aria-label="Search" placeholder="Search..." />
          <Magnifier color="#666" size={14} />
          <Triangle size={8} color="#666" />
        </Field>
        <BrowserTools width="96" height="18" viewBox="0 0 96 18" fill="none" stroke="#999">
          <path d="M1 9.500 L9 2 L17 9.500 H15 V16 H11 V10.500 H7 V16 H3 V9.500 Z" />
          <path d="M33 1 L35.200 6.800 L41 7 L36.500 10.700 L38 16.500 L33 13.200 L28 16.500 L29.500 10.700 L25 7 L30.800 6.800 Z" />
          <circle cx="57" cy="9" r="2.500" /><circle cx="57" cy="9" r="6.500" strokeWidth="2.500" strokeDasharray="3 2.100" />
          <circle cx="82" cy="9" r="7.500" fill="#fbd02d" stroke="#b79a28" /><path d="M79.500 5 V8 M84.500 5 V8 M78 10.500 Q82 15 86 10.500" stroke="#6b5410" strokeWidth="1.200" />
        </BrowserTools>
      </BrowserBar>
      <BrowserTabs>
        {tabs.map((t, i) => (
          <BrowserTab key={i} $active={i === 2}>
            <Explorer size={17} /><span>{t}</span>
            {i === 2 && <svg width="9" height="9" viewBox="0 0 9 9" stroke="#888" strokeWidth="2"><path d="M1 1 L8 8 M8 1 L1 8" /></svg>}
          </BrowserTab>
        ))}
        <NewTab aria-label="New tab">
          <svg width="16" height="16" viewBox="0 0 16 16"><rect x="1.500" y="2.500" width="10" height="13" fill="#fff" stroke="#888" /><path d="M12 0 V8 M8 4 H16 M9 1 L15 7 M15 1 L9 7" stroke="#f0a030" /></svg>
        </NewTab>
      </BrowserTabs>
      <Page>
        <ThemeProvider theme={snapshotSize}>
          <SnapshotFrame>
            <AeroTitle>
              <LogoA size={12} /><span>Odyssey</span>
              {(["min", "max", "close"] as const).map((k) => (
                <AeroButton key={k} $close={k === "close"} aria-label={k}>
                  <svg width="8" height="8" viewBox="0 0 8 8" fill="#fff" stroke="#444" strokeWidth=".8">
                    {k === "min" && <rect x="0.500" y="4" width="7" height="2.500" />}
                    {k === "max" && <path d="M2.500 .5 H7.500 V5 H2.500 Z M.5 3 H5 V7.500 H.5 Z" />}
                    {k === "close" && <path d="M1 1 L7 7 M7 1 L1 7" stroke="#fff" strokeWidth="2" />}
                  </svg>
                </AeroButton>
              ))}
            </AeroTitle>
            <AssessmentForm
              small
              metrics={snapshotSize}
              tabs={[["Abdominal pain/prob", "19/20"], ["Chest pain/problem", "20/20"], ["Breathlessness", "20/20"], ["Personal context", "9/9"]]}
              counts={[16, 42, 54, 68]}
            >
              <Veil>
                <Dialog role="dialog" aria-label="Clinical Warning">
                  <h2>Clinical Warning</h2>
                  <DialogBody>
                    <p>Symptom combination may occur with:</p>
                    <ul>
                      <li><span>–</span>Aortic aneurysm</li>
                      <li><span>–</span>Pulmonary embolism</li>
                    </ul>
                  </DialogBody>
                  <DialogFoot><ActionButton $look="danger"><Cross size={10} />Close</ActionButton></DialogFoot>
                </Dialog>
              </Veil>
              <SnapCursor><Pointer size={14} /></SnapCursor>
            </AssessmentForm>
          </SnapshotFrame>
        </ThemeProvider>
      </Page>
      <TaskBar>
        <TaskButton aria-label="Start"><Start /></TaskButton>
        <SearchBox>
          <Magnifier />
          <input aria-label="Search the computer" placeholder="Type here to search" />
          <Sponsor>
            <svg width="14" height="14" viewBox="0 0 14 14" fill="#fff"><path d="M7 0 L14 14 H10.500 L7 10 L3.500 14 H0 Z" /></svg>
            advanced
          </Sponsor>
        </SearchBox>
        <TaskButton aria-label="Task view"><TaskView /></TaskButton>
        <TaskButton aria-label="File Explorer"><Folder /></TaskButton>
        <TaskButton aria-label="Firefox"><Firefox /></TaskButton>
        <TaskButton $open aria-label="Teams"><Teams /></TaskButton>
        <TaskButton aria-label="Viewer"><AppWindow /></TaskButton>
        <TaskButton aria-label="Data tools"><DataTools /></TaskButton>
        <TaskButton $open $fill="#a95f28" $line="#ff7b0f" aria-label="Outlook"><Outlook /></TaskButton>
        <TaskButton $open aria-label="Internet Explorer"><Explorer size={26} /></TaskButton>
        <Tray>
          <Weather><Sun />38°C <span>Partly sunny</span></Weather>
          <TrayGlyph d="M2 11 L8 5 L14 11" />
          <TrayGlyph d="M4 6.500 H15 V12.500 H5 M6 8.500 H13 V10.500 H6 Z M1 2.500 H5 V5 H1 Z M3 5 V12" />
          <TrayGlyph d="M1 6 H3.500 L7 2.500 V13.500 L3.500 10 H1 Z M9.500 6 Q11 8 9.500 10 M11.500 4 Q14.500 8 11.500 12 M13.500 2.500 Q17 8 13.500 13.500" />
          <TrayGlyph d="M2 14 A12 12 0 0 1 14 2.500 M5 14 A9 9 0 0 1 14 6 M8 14 A6 6 0 0 1 14 9.500 M11 14 A3 3 0 0 1 14 12" />
          <span>ENG</span>
          <Clock>05:14 PM<br />19-04-2023</Clock>
          <ActionCenter />
          <ShowDesktop />
        </Tray>
      </TaskBar>
    </Browser>
  );
}

/* --------------------------- right: desktop ------------------------- */

const Desktop = styled.section`
  position: relative;
  display: flex;
  flex-direction: column;
  height: 100%;
  min-width: 0;
  background: #fff;
`;

const TitleBar = styled.div`
  display: flex;
  align-items: center;
  gap: 6px;
  flex: none;
  height: 23px;
  padding-left: 2px;
  font-size: 12px;
  span { flex: 1; }
`;

const LiveFrame = styled.article`
  display: flex;
  flex-direction: column;
  flex: 1;
  min-height: 0;
  border: solid #000;
  border-width: 0 1px 1px;
`;

const Recorder = styled.div`
  position: absolute;
  top: 24px;
  right: 9px;
  display: flex;
  align-items: center;
  gap: 10px;
  width: 103px;
  height: 41px;
  padding: 0 10px 0 3px;
  border: 1px solid #b5b5b5;
  border-radius: 3px;
  background: #f0f0f0;
  hr { height: 34px; margin: 0 -1px 0 -6px; border: 0; border-left: 1px solid #aaa; }
  button { padding: 0; border: 0; background: none; }
`;

const Balloon = styled.div`
  position: absolute;
  top: 69px;
  right: 9px;
  width: 57px;
  padding: 2px 3px;
  border: 1px solid #777;
  background: #fff;
  font-size: 11px;
  line-height: 16px;
  text-align: center;
  p:first-child { border-bottom: 1px solid #000; }
  svg { position: absolute; right: 4px; top: -8px; }
`;

const LiveCursor = styled.span`
  position: absolute;
  left: 1034px;
  top: 392px;
`;

function LiveDesktop() {
  return (
    <Desktop>
      <TitleBar>
        <LogoA size={15} /><span>Odyssey</span>
        <Caption $pad={19}>
          {(["min", "max", "close"] as const).map((k) => (
            <CaptionButton key={k} aria-label={k}><WindowGlyph kind={k} color="#000" /></CaptionButton>
          ))}
        </Caption>
      </TitleBar>
      <ThemeProvider theme={fullSize}>
        <LiveFrame>
          <AssessmentForm
            metrics={fullSize}
            current="Factor(s) easing"
            tabs={[["Abdominal pain/prob", "19/20"], ["Chest pain/problem", "20/20"], ["Breathlessness", "20/20"], ["Haemoptysis", "19/19"], ["Personal context", "9/9"]]}
            counts={[19, 55, 69, 87]}
          />
        </LiveFrame>
      </ThemeProvider>
      <TaskBar>
        <TaskButton aria-label="Start"><Start /></TaskButton>
        <TaskButton aria-label="Search"><Magnifier /></TaskButton>
        <TaskButton aria-label="Task view"><TaskView /></TaskButton>
        <TaskButton $open aria-label="Chrome"><Chrome /></TaskButton>
        <TaskButton $open aria-label="Outlook"><Outlook mail /></TaskButton>
        <TaskButton $open aria-label="File Explorer"><Folder /></TaskButton>
        <TaskButton $open aria-label="Notepad"><Notepad /></TaskButton>
        <TaskButton $open aria-label="Excel"><Excel /></TaskButton>
        <TaskButton $open aria-label="Data tools"><DataTools /></TaskButton>
        <TaskButton $open aria-label="Viewer"><AppWindow /></TaskButton>
        <TaskButton $open aria-label="Test runner"><TestMark size={26} tile /></TaskButton>
        <TaskButton $open $fill="#505254" aria-label="Odyssey"><OdysseyTile /></TaskButton>
        <Tray><Clock>05:14 PM<br />19-04-2023</Clock></Tray>
      </TaskBar>
      <Recorder>
        <TestMark size={34} />
        <hr />
        <button aria-label="Pause"><svg width="16" height="16" fill="#0bb0ff"><path d="M0 0 H7 V16 H0 Z M9 0 H16 V16 H9 Z" /></svg></button>
        <button aria-label="Stop"><svg width="16" height="16" fill="#0bb0ff"><rect width="16" height="16" /></svg></button>
      </Recorder>
      <Balloon>
        <p>Playback</p><p>Odyssey</p>
        <svg width="8" height="8" viewBox="0 0 8 8" fill="#fff" stroke="#777"><path d="M0 8 L7.500 .5 V8" /></svg>
      </Balloon>
      <LiveCursor><Pointer size={20} /></LiveCursor>
    </Desktop>
  );
}

export default function App() {
  return (
    <>
      <GlobalStyle />
      <Screens>
        <BrowserWindow />
        <LiveDesktop />
      </Screens>
    </>
  );
}
